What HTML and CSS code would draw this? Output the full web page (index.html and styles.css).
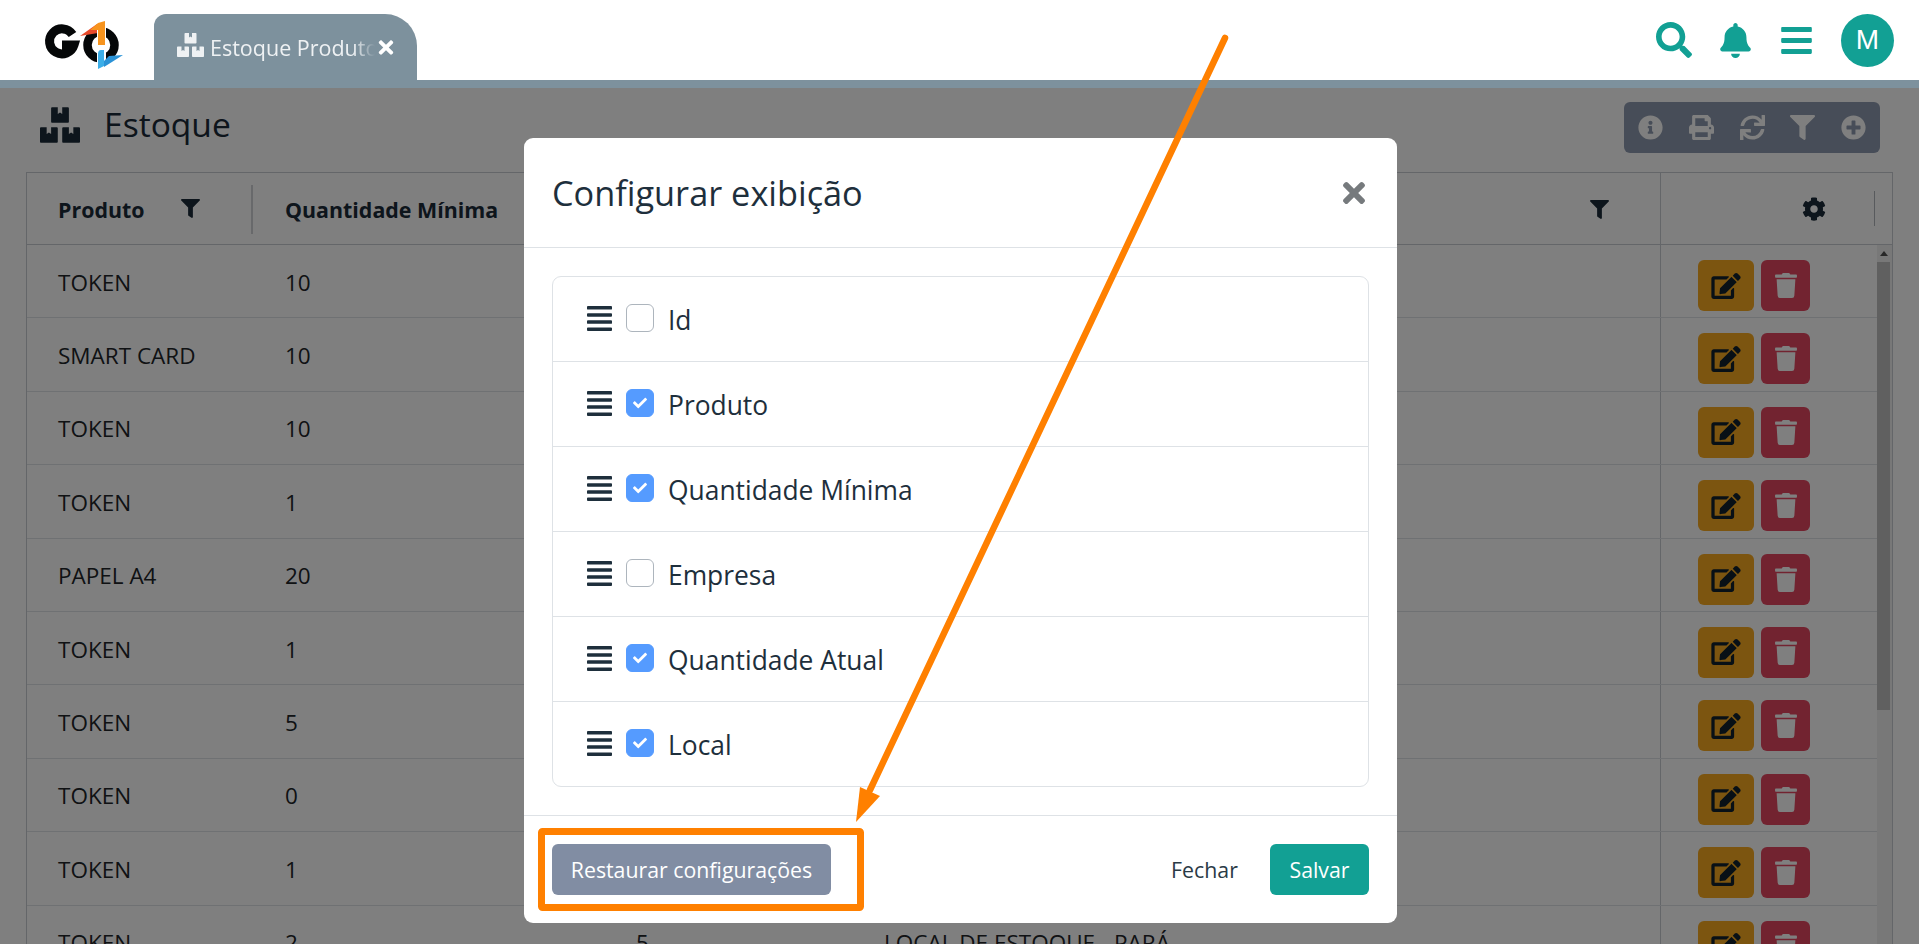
FILE: index.html
```html
<!DOCTYPE html>
<html lang="pt">
<head>
<meta charset="utf-8">
<title>Estoque</title>
<link rel="stylesheet" href="styles.css">
</head>
<body>
<svg class="defs" width="0" height="0" aria-hidden="true">
  <symbol id="i-search" viewBox="0 0 512 512"><path d="M505 442.7L405.3 343c-4.5-4.5-10.6-7-17-7H372c27.6-35.3 44-79.7 44-128C416 93.1 322.9 0 208 0S0 93.1 0 208s93.1 208 208 208c48.3 0 92.7-16.4 128-44v16.3c0 6.4 2.5 12.5 7 17l99.7 99.7c9.4 9.4 24.6 9.4 33.9 0l28.3-28.3c9.4-9.4 9.4-24.6.1-34zM208 336c-70.7 0-128-57.2-128-128 0-70.7 57.2-128 128-128 70.7 0 128 57.2 128 128 0 70.7-57.2 128-128 128z"/></symbol>
  <symbol id="i-bell" viewBox="0 0 448 512"><path d="M224 512c35.32 0 63.97-28.65 63.97-64H160.03c0 35.35 28.65 64 63.97 64zm215.39-149.71c-19.32-20.76-55.47-51.99-55.47-154.29 0-77.7-54.48-139.9-127.94-155.16V32c0-17.67-14.32-32-31.98-32s-31.98 14.33-31.98 32v20.84C118.56 68.1 64.08 130.3 64.08 208c0 102.3-36.15 133.53-55.47 154.29-6 6.45-8.66 14.16-8.61 21.71.11 16.4 12.98 32 32.1 32h383.8c19.12 0 32-15.6 32.1-32 .05-7.55-2.61-15.27-8.61-21.71z"/></symbol>
  <symbol id="i-bars" viewBox="0 0 448 512"><path d="M16 132h416c8.837 0 16-7.163 16-16V76c0-8.837-7.163-16-16-16H16C7.163 60 0 67.163 0 76v40c0 8.837 7.163 16 16 16zm0 160h416c8.837 0 16-7.163 16-16v-40c0-8.837-7.163-16-16-16H16c-8.837 0-16 7.163-16 16v40c0 8.837 7.163 16 16 16zm0 160h416c8.837 0 16-7.163 16-16v-40c0-8.837-7.163-16-16-16H16c-8.837 0-16 7.163-16 16v40c0 8.837 7.163 16 16 16z"/></symbol>
  <symbol id="i-info" viewBox="0 0 512 512"><path d="M256 8C119.043 8 8 119.083 8 256c0 136.997 111.043 248 248 248s248-111.003 248-248C504 119.083 392.957 8 256 8zm0 110c23.196 0 42 18.804 42 42s-18.804 42-42 42-42-18.804-42-42 18.804-42 42-42zm56 254c0 6.627-5.373 12-12 12h-88c-6.627 0-12-5.373-12-12v-24c0-6.627 5.373-12 12-12h12v-64h-12c-6.627 0-12-5.373-12-12v-24c0-6.627 5.373-12 12-12h64c6.627 0 12 5.373 12 12v100h12c6.627 0 12 5.373 12 12v24z"/></symbol>
  <symbol id="i-print" viewBox="0 0 512 512"><path d="M448 192V77.25c0-8.49-3.37-16.62-9.37-22.63L393.37 9.37c-6-6-14.14-9.37-22.63-9.37H96C78.33 0 64 14.33 64 32v160c-35.35 0-64 28.65-64 64v112c0 8.84 7.16 16 16 16h48v96c0 17.67 14.33 32 32 32h320c17.67 0 32-14.33 32-32v-96h48c8.84 0 16-7.16 16-16V256c0-35.35-28.65-64-64-64zm-64 256H128v-96h256v96zm0-224H128V64h192v48c0 8.84 7.16 16 16 16h48v96zm48 72c-13.25 0-24-10.75-24-24 0-13.26 10.75-24 24-24s24 10.74 24 24c0 13.25-10.75 24-24 24z"/></symbol>
  <symbol id="i-sync" viewBox="0 0 512 512"><path d="M440.65 12.57l4 82.77A247.16 247.16 0 0 0 255.83 8C134.73 8 33.91 94.92 12.29 209.82A12 12 0 0 0 24.09 224h49.05a12 12 0 0 0 11.67-9.26 175.91 175.91 0 0 1 317-56.94l-101.46-4.86a12 12 0 0 0-12.57 12v47.41a12 12 0 0 0 12 12H500a12 12 0 0 0 12-12V12a12 12 0 0 0-12-12h-47.37a12 12 0 0 0-11.98 12.57zM255.83 432a175.61 175.61 0 0 1-146-77.8l101.8 4.87a12 12 0 0 0 12.57-12v-47.4a12 12 0 0 0-12-12H12a12 12 0 0 0-12 12V500a12 12 0 0 0 12 12h47.35a12 12 0 0 0 12-12.6l-4.15-82.57A247.17 247.17 0 0 0 255.83 504c121.11 0 221.93-86.92 243.55-201.82a12 12 0 0 0-11.8-14.18h-49.05a12 12 0 0 0-11.67 9.26A175.86 175.86 0 0 1 255.83 432z"/></symbol>
  <symbol id="i-filter" viewBox="0 0 512 512"><path d="M487.976 0H24.028C2.71 0-8.047 25.866 7.058 40.971L192 225.941V432c0 7.831 3.821 15.17 10.237 19.662l80 55.98C298.02 518.69 320 507.493 320 487.98V225.941l184.947-184.97C520.021 25.896 509.338 0 487.976 0z"/></symbol>
  <symbol id="i-plus" viewBox="0 0 512 512"><path d="M256 8C119 8 8 119 8 256s111 248 248 248 248-111 248-248S393 8 256 8zm144 276c0 6.6-5.4 12-12 12h-92v92c0 6.6-5.4 12-12 12h-56c-6.6 0-12-5.4-12-12v-92h-92c-6.6 0-12-5.4-12-12v-56c0-6.6 5.4-12 12-12h92v-92c0-6.6 5.4-12 12-12h56c6.6 0 12 5.4 12 12v92h92c6.6 0 12 5.4 12 12v56z"/></symbol>
  <symbol id="i-cog" viewBox="0 0 512 512"><path d="M487.4 315.7l-42.6-24.6c4.3-23.2 4.3-47 0-70.2l42.6-24.6c4.9-2.8 7.1-8.6 5.5-14-11.1-35.6-30-67.8-54.7-94.6-3.8-4.1-10-5.1-14.8-2.3L380.8 110c-17.9-15.4-38.5-27.3-60.8-35.1V25.8c0-5.6-3.9-10.5-9.4-11.7-36.7-8.2-74.3-7.8-109.2 0-5.5 1.2-9.4 6.1-9.4 11.7V75c-22.2 7.9-42.8 19.8-60.8 35.1L88.7 85.5c-4.9-2.8-11-1.9-14.8 2.3-24.7 26.7-43.6 58.9-54.7 94.6-1.7 5.4.6 11.2 5.5 14L67.3 221c-4.3 23.2-4.3 47 0 70.2l-42.6 24.6c-4.9 2.8-7.1 8.6-5.5 14 11.1 35.6 30 67.8 54.7 94.6 3.8 4.1 10 5.1 14.8 2.3l42.6-24.6c17.9 15.4 38.5 27.3 60.8 35.1v49.2c0 5.6 3.9 10.5 9.4 11.7 36.7 8.2 74.3 7.8 109.2 0 5.5-1.2 9.4-6.1 9.4-11.7v-49.2c22.2-7.9 42.8-19.8 60.8-35.1l42.6 24.6c4.9 2.8 11 1.9 14.8-2.3 24.7-26.7 43.6-58.9 54.7-94.6 1.5-5.5-.7-11.3-5.6-14.1zM256 336c-44.1 0-80-35.9-80-80s35.9-80 80-80 80 35.9 80 80-35.9 80-80 80z"/></symbol>
  <symbol id="i-edit" viewBox="0 0 576 512"><path d="M402.6 83.2l90.2 90.2c3.8 3.8 3.8 10 0 13.8L274.4 405.6l-92.8 10.3c-12.4 1.4-22.9-9.1-21.5-21.5l10.3-92.8L388.8 83.2c3.8-3.8 10-3.8 13.8 0zm162-22.9l-48.8-48.8c-15.2-15.2-39.9-15.2-55.2 0l-35.4 35.4c-3.8 3.8-3.8 10 0 13.8l90.2 90.2c3.8 3.8 10 3.8 13.8 0l35.4-35.4c15.2-15.3 15.2-40 0-55.2zM384 346.2V448H64V128h229.8c3.2 0 6.2-1.3 8.5-3.5l40-40c7.6-7.6 2.2-20.5-8.5-20.5H48C21.5 64 0 85.5 0 112v352c0 26.5 21.5 48 48 48h352c26.5 0 48-21.5 48-48V306.2c0-10.7-12.9-16-20.5-8.5l-40 40c-2.2 2.3-3.5 5.3-3.5 8.5z"/></symbol>
  <symbol id="i-trash" viewBox="0 0 448 512"><path d="M432 32H312l-9.4-18.7A24 24 0 0 0 281.1 0H166.8a23.72 23.72 0 0 0-21.4 13.3L136 32H16A16 16 0 0 0 0 48v32a16 16 0 0 0 16 16h416a16 16 0 0 0 16-16V48a16 16 0 0 0-16-16zM53.2 467a48 48 0 0 0 47.9 45h245.8a48 48 0 0 0 47.9-45L416 128H32z"/></symbol>
  <symbol id="i-times" viewBox="0 0 352 512"><path d="M242.72 256l100.07-100.07c12.28-12.28 12.28-32.19 0-44.48l-22.24-22.24c-12.28-12.28-32.19-12.28-44.48 0L176 189.28 75.93 89.21c-12.28-12.28-32.19-12.28-44.48 0L9.21 111.45c-12.28 12.28-12.28 32.19 0 44.48L109.28 256 9.21 356.07c-12.28 12.28-12.28 32.19 0 44.48l22.24 22.24c12.28 12.28 32.2 12.28 44.48 0L176 322.72l100.07 100.07c12.28 12.28 32.2 12.28 44.48 0l22.24-22.24c12.28-12.28 12.28-32.19 0-44.48L242.72 256z"/></symbol>
  <symbol id="i-boxes" viewBox="0 0 576 512"><path d="M560 288h-80v96l-32-21.3-32 21.3v-96h-80c-8.8 0-16 7.2-16 16v192c0 8.8 7.2 16 16 16h224c8.8 0 16-7.2 16-16V304c0-8.8-7.2-16-16-16zm-384-64h224c8.8 0 16-7.2 16-16V16c0-8.8-7.2-16-16-16h-80v96l-32-21.3L256 96V0h-80c-8.8 0-16 7.2-16 16v192c0 8.8 7.2 16 16 16zm64 64h-80v96l-32-21.3L96 384v-96H16c-8.8 0-16 7.2-16 16v192c0 8.8 7.2 16 16 16h224c8.8 0 16-7.2 16-16V304c0-8.8-7.2-16-16-16z"/></symbol>
  <symbol id="i-justify" viewBox="0 0 448 512"><path d="M432 416H16a16 16 0 0 0-16 16v32a16 16 0 0 0 16 16h416a16 16 0 0 0 16-16v-32a16 16 0 0 0-16-16zm0-128H16a16 16 0 0 0-16 16v32a16 16 0 0 0 16 16h416a16 16 0 0 0 16-16v-32a16 16 0 0 0-16-16zm0-128H16a16 16 0 0 0-16 16v32a16 16 0 0 0 16 16h416a16 16 0 0 0 16-16v-32a16 16 0 0 0-16-16zm0-128H16A16 16 0 0 0 0 48v32a16 16 0 0 0 16 16h416a16 16 0 0 0 16-16V48a16 16 0 0 0-16-16z"/></symbol>
  <symbol id="i-check" viewBox="0 0 512 512"><path d="M173.898 439.404l-166.4-166.4c-9.997-9.997-9.997-26.206 0-36.204l36.203-36.204c9.997-10 26.207-10 36.204 0L192 312.69 432.095 72.596c9.997-9.997 26.207-9.997 36.204 0l36.203 36.204c9.997 9.997 9.997 26.206 0 36.204l-294.4 294.401c-9.998 9.997-26.207 9.997-36.204-.001z"/></symbol>
</svg>

<header class="topbar">
  <svg class="logo" viewBox="0 0 110 70" width="110" height="70" aria-label="GO">
    <path d="M42.5 29.5 A12.5 12.5 0 1 0 44 40 H32" fill="none" stroke="#050708" stroke-width="9"/>
    <circle cx="71" cy="40" r="13.5" fill="none" stroke="#050708" stroke-width="8.5"/>
    <path d="M50 31 L67 19 L68 28 Z" fill="#e8492a"/>
    <path d="M67 16 H76 V42 H67 Z" fill="#fff"/>
    <path d="M67 47 H76 V64 H67 Z" fill="#fff"/>
    <path d="M60 25 L68 18 L75 16 V40 H68 V25 Z" fill="#f7941e"/>
    <path d="M68 49 Q68 45 71 45 H74 V61 L68 64 Z" fill="#3caee8"/>
    <path d="M74 62 L93 50 L79 51 L74 56 Z" fill="#2a92d6"/>
  </svg>
  <div class="tab">
    <svg class="ico tab-ico"><use href="#i-boxes"/></svg>
    <span class="tab-label">Estoque Produto</span>
    <svg class="ico tab-close"><use href="#i-times"/></svg>
  </div>
  <nav class="top-actions">
    <svg class="ico top-search"><use href="#i-search"/></svg>
    <svg class="ico top-bell"><use href="#i-bell"/></svg>
    <svg class="ico top-bars"><use href="#i-bars"/></svg>
    <div class="avatar">M</div>
  </nav>
</header>
<div class="stripe"></div>

<main class="page">
  <div class="title-row">
    <div class="title">
      <svg class="ico title-ico"><use href="#i-boxes"/></svg>
      <h1>Estoque</h1>
    </div>
    <div class="toolbar">
      <svg class="ico"><use href="#i-info"/></svg>
      <svg class="ico"><use href="#i-print"/></svg>
      <svg class="ico"><use href="#i-sync"/></svg>
      <svg class="ico"><use href="#i-filter"/></svg>
      <svg class="ico"><use href="#i-plus"/></svg>
    </div>
  </div>

  <div class="grid">
    <div class="row head">
      <div class="cell c1"><b>Produto</b><svg class="ico f1"><use href="#i-filter"/></svg></div>
      <div class="cell c2"><b>Quantidade Mínima</b></div>
      <div class="cell c3"></div>
      <div class="cell c4"><svg class="ico f2"><use href="#i-filter"/></svg></div>
      <div class="cell c5"><svg class="ico gear"><use href="#i-cog"/></svg></div>
    </div>
    <div class="row"><div class="cell c1">TOKEN</div><div class="cell c2">10</div><div class="cell c3"></div><div class="cell c4"></div><div class="cell c5 acts"><span class="btn-e"><svg class="ico"><use href="#i-edit"/></svg></span><span class="btn-d"><svg class="ico"><use href="#i-trash"/></svg></span></div></div>
    <div class="row"><div class="cell c1">SMART CARD</div><div class="cell c2">10</div><div class="cell c3"></div><div class="cell c4"></div><div class="cell c5 acts"><span class="btn-e"><svg class="ico"><use href="#i-edit"/></svg></span><span class="btn-d"><svg class="ico"><use href="#i-trash"/></svg></span></div></div>
    <div class="row"><div class="cell c1">TOKEN</div><div class="cell c2">10</div><div class="cell c3"></div><div class="cell c4"></div><div class="cell c5 acts"><span class="btn-e"><svg class="ico"><use href="#i-edit"/></svg></span><span class="btn-d"><svg class="ico"><use href="#i-trash"/></svg></span></div></div>
    <div class="row"><div class="cell c1">TOKEN</div><div class="cell c2">1</div><div class="cell c3"></div><div class="cell c4"></div><div class="cell c5 acts"><span class="btn-e"><svg class="ico"><use href="#i-edit"/></svg></span><span class="btn-d"><svg class="ico"><use href="#i-trash"/></svg></span></div></div>
    <div class="row"><div class="cell c1">PAPEL A4</div><div class="cell c2">20</div><div class="cell c3"></div><div class="cell c4"></div><div class="cell c5 acts"><span class="btn-e"><svg class="ico"><use href="#i-edit"/></svg></span><span class="btn-d"><svg class="ico"><use href="#i-trash"/></svg></span></div></div>
    <div class="row"><div class="cell c1">TOKEN</div><div class="cell c2">1</div><div class="cell c3"></div><div class="cell c4"></div><div class="cell c5 acts"><span class="btn-e"><svg class="ico"><use href="#i-edit"/></svg></span><span class="btn-d"><svg class="ico"><use href="#i-trash"/></svg></span></div></div>
    <div class="row"><div class="cell c1">TOKEN</div><div class="cell c2">5</div><div class="cell c3"></div><div class="cell c4"></div><div class="cell c5 acts"><span class="btn-e"><svg class="ico"><use href="#i-edit"/></svg></span><span class="btn-d"><svg class="ico"><use href="#i-trash"/></svg></span></div></div>
    <div class="row"><div class="cell c1">TOKEN</div><div class="cell c2">0</div><div class="cell c3"></div><div class="cell c4"></div><div class="cell c5 acts"><span class="btn-e"><svg class="ico"><use href="#i-edit"/></svg></span><span class="btn-d"><svg class="ico"><use href="#i-trash"/></svg></span></div></div>
    <div class="row"><div class="cell c1">TOKEN</div><div class="cell c2">1</div><div class="cell c3"></div><div class="cell c4"></div><div class="cell c5 acts"><span class="btn-e"><svg class="ico"><use href="#i-edit"/></svg></span><span class="btn-d"><svg class="ico"><use href="#i-trash"/></svg></span></div></div>
    <div class="row"><div class="cell c1">TOKEN</div><div class="cell c2">2</div><div class="cell c3">5</div><div class="cell c4">LOCAL DE ESTOQUE - PARÁ</div><div class="cell c5 acts"><span class="btn-e"><svg class="ico"><use href="#i-edit"/></svg></span><span class="btn-d"><svg class="ico"><use href="#i-trash"/></svg></span></div></div>
    <div class="scroll"><span class="scroll-up"></span><span class="scroll-thumb"></span></div>
  </div>
</main>

<div class="backdrop"></div>

<section class="modal">
  <div class="modal-head">
    <h2>Configurar exibição</h2>
    <svg class="ico modal-x"><use href="#i-times"/></svg>
  </div>
  <div class="modal-body">
    <ul class="list">
      <li><svg class="ico grip"><use href="#i-justify"/></svg><span class="box"></span><span>Id</span></li>
      <li><svg class="ico grip"><use href="#i-justify"/></svg><span class="box on"><svg class="ico"><use href="#i-check"/></svg></span><span>Produto</span></li>
      <li><svg class="ico grip"><use href="#i-justify"/></svg><span class="box on"><svg class="ico"><use href="#i-check"/></svg></span><span>Quantidade Mínima</span></li>
      <li><svg class="ico grip"><use href="#i-justify"/></svg><span class="box"></span><span>Empresa</span></li>
      <li><svg class="ico grip"><use href="#i-justify"/></svg><span class="box on"><svg class="ico"><use href="#i-check"/></svg></span><span>Quantidade Atual</span></li>
      <li><svg class="ico grip"><use href="#i-justify"/></svg><span class="box on"><svg class="ico"><use href="#i-check"/></svg></span><span>Local</span></li>
    </ul>
  </div>
  <div class="modal-foot">
    <button class="btn btn-reset">Restaurar configurações</button>
    <button class="btn btn-close">Fechar</button>
    <button class="btn btn-save">Salvar</button>
  </div>
</section>

<svg class="annot" viewBox="0 0 1919 944" width="1919" height="944" aria-hidden="true">
  <rect x="541.5" y="831.5" width="319" height="76" rx="1" fill="none" stroke="#ff8000" stroke-width="7"/>
  <line x1="1225" y1="38" x2="870" y2="790" stroke="#ff8000" stroke-width="6.5" stroke-linecap="round"/>
  <path d="M856 822 L860 787 L880 796 Z" fill="#ff8000"/>
</svg>
</body>
</html>
```
FILE: styles.css
```css
* { box-sizing: border-box; }
html, body { margin: 0; height: 100%; overflow: hidden; }
body {
  position: relative;
  width: 1919px;
  height: 944px;
  background: #fff;
  color: #1e2f3c;
  font-family: "Open Sans", "Noto Sans", sans-serif;
}
.defs { position: absolute; }
.ico { display: block; fill: currentColor; }

/* top bar */
.topbar {
  position: relative;
  z-index: 3;
  display: flex;
  height: 80px;
  background: #fff;
}
.logo { margin: 5px 0 0 30px; flex: none; }
.tab {
  display: flex;
  align-items: center;
  flex: none;
  width: 263px;
  height: 66px;
  margin: 14px 0 0 14px;
  padding-left: 23px;
  background: #7d919d;
  border-radius: 12px 32px 0 0;
  color: #eef1f3;
}
.tab-ico { width: 27px; height: 24px; flex: none; margin-top: -4px; }
.tab-label {
  width: 165px;
  margin-left: 6px;
  overflow: hidden;
  white-space: nowrap;
  font-size: 21.5px;
  -webkit-mask-image: linear-gradient(to right, #000 143px, transparent 165px);
  mask-image: linear-gradient(to right, #000 143px, transparent 165px);
}
.tab-close { width: 18px; height: 21px; margin-left: 2px; color: #fff; flex: none; }
.top-actions {
  display: flex;
  align-items: center;
  margin-left: auto;
  padding-right: 25px;
  color: #12a094;
}
.top-search { width: 36px; height: 36px; margin-right: 28px; }
.top-bell { width: 31px; height: 35px; margin-right: 30px; }
.top-bars { width: 31px; height: 35px; margin-right: 29px; }
.avatar {
  display: flex;
  align-items: center;
  justify-content: center;
  width: 53px;
  height: 53px;
  border-radius: 50%;
  background: #12a094;
  color: #fff;
  font-family: "Liberation Sans", Arial, sans-serif;
  font-size: 28px;
}
.stripe { position: relative; z-index: 3; height: 8px; background: #7d919d; }

/* page */
.page { padding: 14px 26px 0; }
.title-row { display: flex; justify-content: space-between; height: 70px; }
.title { display: flex; align-items: center; height: 46px; color: #1a2a38; }
.title-ico { width: 40px; height: 36px; margin: 0 0 0 14px; }
.title h1 { margin: 0 0 0 24px; font-size: 33.6px; font-weight: 400; line-height: 1; }
.toolbar {
  display: flex;
  align-items: center;
  justify-content: space-between;
  width: 256px;
  height: 51px;
  margin-right: 13px;
  padding: 0 14px;
  border-radius: 6px;
  background: #8f9bb0;
  color: #fff;
}
.toolbar .ico { width: 25px; height: 25px; }

/* table */
.grid {
  position: relative;
  height: 772px;
  overflow: hidden;
  border: 1px solid #c8cdd2;
  border-bottom: 0;
  width: 1867px;
  color: #212529;
  font-size: 22.5px;
}
.row {
  display: flex;
  height: 73.4px;
  border-bottom: 1px solid #dfe3e6;
}
.row.head { height: 72px; border-bottom: 1px solid #c8cdd2; color: #1a2a38; font-size: 21.4px; }
.row.head b { font-weight: 700; }
.row.head .cell { padding-top: 1px; }
.cell { display: flex; align-items: center; flex: none; }
.c1 { width: 226px; padding-left: 31px; }
.c2 { width: 350px; padding-left: 32px; }
.c3 { width: 248px; padding-left: 33px; }
.c4 { width: 810px; padding-left: 33px; white-space: nowrap; border-right: 1px solid #c8cdd2; }
.c5 { flex: 1; }
.row:not(.head) .cell { padding-top: 2px; }
.head .c1 { position: relative; }
.head .c1::after {
  content: "";
  position: absolute;
  right: 0;
  top: 12px;
  height: 49px;
  border-right: 2px solid #d0d3d6;
}
.f1 { width: 19px; height: 19px; margin-left: 36px; margin-top: -2px; }
.f2 { width: 19px; height: 19px; margin-left: 706px; }
.gear { width: 24px; height: 24px; margin-left: 141px; }
.head .c5 { position: relative; }
.head .c5::after {
  content: "";
  position: absolute;
  right: 17px;
  top: 18px;
  height: 35px;
  border-right: 1px solid #b0b5ba;
}
.row:not(.head) .cell.acts { gap: 7px; padding-left: 37px; align-items: flex-start; padding-top: 15px; }
.btn-e, .btn-d {
  display: flex;
  align-items: center;
  justify-content: center;
  height: 51px;
  border-radius: 6px;
}
.btn-e { width: 56px; background: #f8aa20; color: #11202c; }
.btn-d { width: 49px; background: #e44660; color: #fff; }
.btn-e .ico { width: 30px; height: 26px; }
.btn-d .ico { width: 22px; height: 25px; }
.scroll {
  position: absolute;
  right: 0;
  top: 72px;
  bottom: 0;
  width: 15px;
  background: #f1f1f1;
}
.scroll-up {
  position: absolute;
  left: 3px;
  top: 6px;
  border: 4px solid transparent;
  border-top: 0;
  border-bottom: 5px solid #505050;
}
.scroll-thumb {
  position: absolute;
  left: 0;
  top: 17px;
  width: 13px;
  height: 448px;
  background: #c1c1c1;
}

/* backdrop + modal */
.backdrop {
  position: absolute;
  z-index: 1;
  left: 0;
  right: 0;
  top: 88px;
  bottom: 0;
  background: rgba(0, 0, 0, .5);
}
.modal {
  position: absolute;
  z-index: 2;
  left: 524px;
  top: 138px;
  display: flex;
  flex-direction: column;
  width: 873px;
  height: 785px;
  border-radius: 9px;
  background: #fff;
  color: #1e2f3c;
}
.modal-head {
  display: flex;
  align-items: center;
  justify-content: space-between;
  height: 110px;
  padding: 2px 32px 0 28px;
  border-bottom: 1px solid #dee2e6;
}
.modal-head h2 { margin: 0; font-size: 34.3px; font-weight: 400; line-height: 1; }
.modal-x { width: 22px; height: 32px; margin-top: -2px; color: #767a7d; }
.modal-body { flex: 1; padding: 28px 28px 0; }
.list {
  margin: 0;
  padding: 0;
  list-style: none;
  border: 1px solid #dee2e6;
  border-radius: 9px;
  font-size: 26.4px;
}
.list li {
  display: flex;
  align-items: center;
  height: 85px;
  padding: 2px 0 0 34px;
  border-top: 1px solid #dee2e6;
}
.list li:first-child { height: 84px; border-top: 0; }
.grip { width: 25px; height: 29px; margin-top: -4px; flex: none; }
.box {
  display: flex;
  align-items: center;
  justify-content: center;
  width: 28px;
  height: 28px;
  margin: -4px 14px 0 14px;
  border: 1px solid #adb5bd;
  border-radius: 6px;
  flex: none;
}
.box.on { border-color: #559bff; background: #559bff; color: #fff; }
.box .ico { width: 14px; height: 14px; }
.modal-foot {
  display: flex;
  align-items: flex-start;
  height: 108px;
  padding: 28px 28px 0;
  border-top: 1px solid #dee2e6;
}
.btn {
  height: 51px;
  border: 0;
  border-radius: 6px;
  background: none;
  color: #fff;
  font-family: inherit;
  font-size: 21.3px;
  white-space: nowrap;
}
.btn-reset { width: 279px; padding: 0; background: #818da3; }
.btn-close { width: 103px; padding: 0; margin-left: auto; color: #2a3a46; }
.btn-save { width: 99px; padding: 0; margin-left: 14px; background: #12a094; }

.annot { position: absolute; z-index: 4; left: 0; top: 0; pointer-events: none; }
```
